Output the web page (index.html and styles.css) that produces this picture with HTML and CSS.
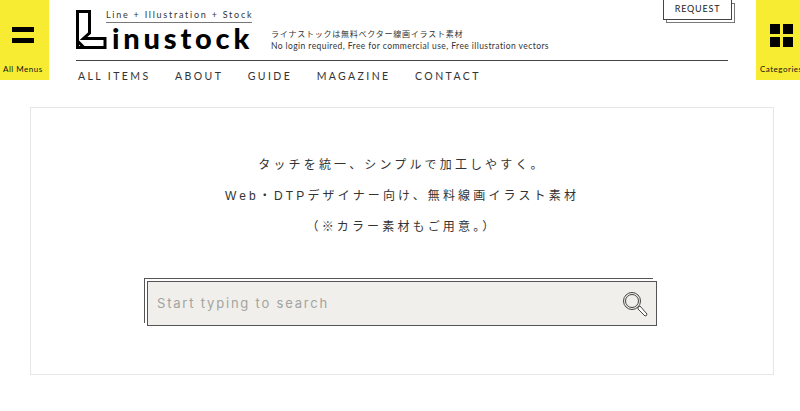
FILE: index.html
```html
<!DOCTYPE html>
<html lang="ja">
<head>
  <meta charset="UTF-8" />
  <meta name="viewport" content="width=device-width, initial-scale=1" />
  <title>Linustock</title>
  <link rel="stylesheet" href="styles.css">
</head>
<body>

<header class="cabecera">
  <a class="menu-btn" href="#">
    <span class="icono-igual"><i></i><i></i></span>
    <span class="menu-texto">All Menus</span>
  </a>

  <div class="centro">
    <div class="marca">
      <a class="logo" href="#">
        <svg class="logo-l" width="31" height="40" viewBox="0 0 31 40" aria-hidden="true">
          <path d="M1.5 1.5H13.5V23L7.5 28.5H29V37.5H1.5V1.5Z M1.5 31L7.5 37" fill="none" stroke="#000" stroke-width="3"/>
        </svg>
        <div class="logo-textos">
          <div class="logo-lema">Line + Illustration + Stock</div>
          <div class="logo-nombre">inustock</div>
        </div>
      </a>
      <div class="descripcion">
        <p class="desc-ja">ライナストックは無料ベクター線画イラスト素材</p>
        <p class="desc-en">No login required, Free for commercial use, Free illustration vectors</p>
      </div>
      <a class="request" href="#">REQUEST</a>
    </div>
    <nav class="nav">
      <a href="#">ALL ITEMS</a>
      <a href="#">ABOUT</a>
      <a href="#">GUIDE</a>
      <a href="#">MAGAZINE</a>
      <a href="#">CONTACT</a>
    </nav>
  </div>

  <a class="menu-btn menu-derecha" href="#">
    <span class="icono-cuadros"><i></i><i></i><i></i><i></i></span>
    <span class="menu-texto">Categories</span>
  </a>
</header>

<main class="principal">
  <section class="caja">
    <p>タッチを統一、シンプルで加工しやすく。</p>
    <p>Web・DTPデザイナー向け、無料線画イラスト素材</p>
    <p>（※カラー素材もご用意。）</p>

    <form class="buscador">
      <input type="search" placeholder="Start typing to search" aria-label="Search" />
      <svg class="lupa" width="26" height="28" viewBox="0 0 26 28" aria-hidden="true">
        <circle cx="10" cy="10" r="8.5" fill="none" stroke="#444" stroke-width="1"/>
        <circle cx="10" cy="10" r="6.5" fill="none" stroke="#444" stroke-width="1"/>
        <path d="M16 16L18 15L25 23Q25 25 23 25L16 18Z" fill="#fff" stroke="#444" stroke-width="1"/>
      </svg>
    </form>
  </section>
</main>

</body>
</html>
```

FILE: styles.css
```css
* { box-sizing: border-box; }
body {
  margin: 0; background: #fff; color: #222; overflow: hidden;
  font-family: 'Lato', 'Noto Sans CJK JP', sans-serif;
}
a { color: inherit; text-decoration: none; }
p { margin: 0; }

.cabecera { display: flex; align-items: flex-start; height: 107px; }

.menu-btn {
  flex: none; width: 49px; height: 80px; background: #f7ec32; color: #111;
  display: flex; flex-direction: column; align-items: flex-start;
  font-size: 8px; letter-spacing: 0.5px; padding: 27px 0 0 3px;
}
.menu-derecha { width: 44px; padding: 24px 0 0 4px; }
.menu-texto { white-space: nowrap; margin-top: auto; margin-bottom: 6px; }

.icono-igual { display: flex; flex-direction: column; gap: 6px; margin-left: 9px; }
.icono-igual i { display: block; width: 22px; height: 5px; background: #000; }
.icono-cuadros { display: grid; grid-template-columns: 10px 10px; gap: 3px; margin-left: 10px; }
.icono-cuadros i { display: block; width: 10px; height: 10px; background: #000; }

.centro { flex: 1; margin: 0 28px 0 27px; }
.marca {
  display: flex; align-items: flex-start; height: 61px;
  border-bottom: 1px solid #444; position: relative;
}
.logo { display: flex; align-items: flex-start; padding-top: 9px; width: 195px; }
.logo-l { flex: none; margin-top: 1px; }
.logo-textos { margin-left: -1px; width: 146px; }
.logo-lema {
  font-size: 9px; letter-spacing: 1.75px; line-height: 11px; padding: 0 0 2px 0;
  border-bottom: 1px solid #777; white-space: nowrap; color: #333; height: 14px;
}
.logo-nombre {
  font-weight: 900; font-size: 29px; line-height: 26px; letter-spacing: 3.8px;
  color: #000; white-space: nowrap; margin: 2px 0 0 6px;
}

.descripcion { padding-top: 29px; font-size: 8px; color: #333; }
.desc-ja { font-size: 8px; line-height: 11px; letter-spacing: 0.77px; }
.desc-en { font-size: 8.5px; line-height: 12px; letter-spacing: 0.42px; white-space: nowrap; }

.request {
  position: absolute; right: -4px; top: 0; width: 69px; height: 20px;
  border: 1px solid #444; border-top: none; background: #fff;
  font-size: 9px; letter-spacing: 0.8px; text-align: center; line-height: 18px;
  box-shadow: 3px 3px 0 -1px #fff, 3px 3px 0 0 #777;
}

.nav { display: flex; gap: 24.5px; padding: 9px 0 0 2px; font-size: 10.5px; letter-spacing: 2.4px; line-height: 13px; color: #333; }

.principal { padding: 0 26px 0 30px; }
.caja {
  height: 268px; border: 1px solid #e6e6e6; padding-top: 42px;
  display: flex; flex-direction: column; align-items: center;
  font-family: 'Liberation Sans', 'Noto Sans CJK JP', sans-serif;
  font-size: 12px; letter-spacing: 3.15px; line-height: 31px; color: #333;
}
.buscador {
  position: relative; width: 510px; height: 45px; margin-top: 38px;
  background: #f0efeb; border: 1px solid #555; flex: none;
}
.buscador::before {
  content: ""; position: absolute; left: -4px; top: -4px; width: 508px; height: 44px;
  border-top: 1px solid #555; border-left: 1px solid #555;
}
.buscador input {
  width: 100%; height: 100%; background: none; border: none; outline: none;
  padding: 0 50px 2px 9px; font-family: 'Inter', sans-serif; font-size: 13px; letter-spacing: 1.8px;
}
.buscador input::placeholder { color: #a3a3a0; opacity: 1; }
.lupa { position: absolute; right: 8px; top: 9px; }
```
